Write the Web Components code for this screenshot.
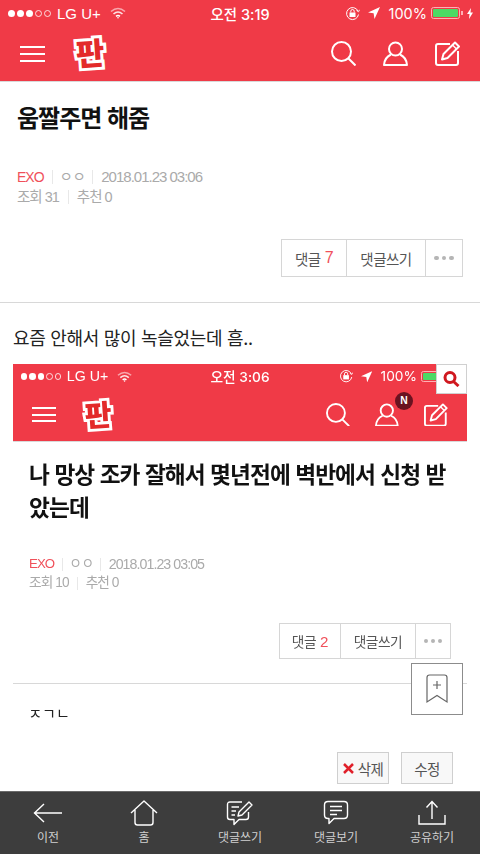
<!DOCTYPE html>
<html lang="ko">
<head>
<meta charset="utf-8">
<title>판</title>
<style>
    html, body { margin: 0; background: #fff; }
    body { font-family: "Liberation Sans", "Noto Sans CJK KR", sans-serif; }
</style>
</head>
<body>
<pann-page>
    <app-header time="3:19"></app-header>
    <post-head>움짤주면 해줌
        <meta-info slot="meta" views="31" date="2018.01.23 03:06"></meta-info>
        <action-group slot="actions" count="7"></action-group>
    </post-head>
    <post-body>
        <p>요즘 안해서 많이 녹슬었는데 흠..</p>
        <shot-frame>
            <app-header time="3:06" badge="N"></app-header>
            <post-head>나 망상 조카 잘해서 몇년전에 벽반에서 신청 받았는데
                <meta-info slot="meta" views="10" date="2018.01.23 03:05"></meta-info>
                <action-group slot="actions" count="2"></action-group>
            </post-head>
            <div style="padding: 20px 16px 0; font-size: 16px; line-height: 24px; color: #222;">ㅈㄱㄴ</div>
        </shot-frame>
    </post-body>
    <edit-row></edit-row>
    <bookmark-button></bookmark-button>
    <tab-bar>
        <tab-item label="이전">
            <svg width="30" height="26" viewBox="0 0 30 26" fill="none" stroke="#fff" stroke-width="1.4"><path d="M1 13H29M11 4L1.5 13L11 22"/></svg>
        </tab-item>
        <tab-item label="홈">
            <svg width="28" height="26" viewBox="0 0 28 26" fill="none" stroke="#fff" stroke-width="1.4" stroke-linejoin="round"><path d="M1 13L14 1L27 13M5 10V22.5Q5 25 7.5 25H20.5Q23 25 23 22.5V10"/></svg>
        </tab-item>
        <tab-item label="댓글쓰기">
            <svg width="28" height="26" viewBox="0 0 28 26" fill="none" stroke="#fff" stroke-width="1.4" stroke-linejoin="round"><path d="M16 2H4Q1.500 2 1.500 4.500V17Q1.500 19.500 4 19.500H8V24.500L13 19.500H20Q22.500 19.500 22.500 17V12"/><path d="M5.500 7H13M5.500 11H10M5.500 15H9"/><path d="M12 16L13 12L23 2L26 5L16 15Z"/></svg>
        </tab-item>
        <tab-item label="댓글보기">
            <svg width="26" height="26" viewBox="0 0 26 26" fill="none" stroke="#fff" stroke-width="1.4" stroke-linejoin="round"><path d="M5 1.500H21Q24.500 1.500 24.500 5V15Q24.500 18.500 21 18.500H11L6 23.500V18.500H5Q1.500 18.500 1.500 15V5Q1.500 1.500 5 1.500Z"/><path d="M7 6.500H19M7 10.500H19M7 14.500H14"/></svg>
        </tab-item>
        <tab-item label="공유하기">
            <svg width="30" height="26" viewBox="0 0 30 26" fill="none" stroke="#fff" stroke-width="1.4"><path d="M15 19V2M9.500 7.500L15 1.500L20.500 7.500M2 15V24H28V15"/></svg>
        </tab-item>
    </tab-bar>
</pann-page>

<script>
const FONT = `"Liberation Sans", "Noto Sans CJK KR", sans-serif`;

const makeTemplate = (html) => {
    const t = document.createElement("template");
    t.innerHTML = html;
    return t;
};

class BaseEl extends HTMLElement {
    constructor() {
        super();
        this.attachShadow({ mode: "open" });
    }
    render(t) {
        this.shadowRoot.appendChild(t.content.cloneNode(true));
    }
}

const pageTpl = makeTemplate(/*html*/`
<style>
    :host {
        display: flex;
        flex-direction: column;
        position: relative;
        width: 480px;
        height: 854px;
        overflow: hidden;
        background: #fff;
        font-family: ${FONT};
    }
</style>
<slot></slot>`);
class PannPage extends BaseEl {
    connectedCallback() { this.render(pageTpl); }
}

const headerTpl = makeTemplate(/*html*/`
<style>
    :host { display: block; background: #f03a47; color: #fff; border-bottom: 1px solid #d9d9d9; height: 81px; box-sizing: content-box; }
    .status { display: flex; align-items: center; height: 26px; position: relative; font: 14.5px Inter, "Noto Sans CJK KR", sans-serif; }
    .left, .right { display: flex; align-items: center; position: absolute; top: 0; height: 26px; }
    .left { left: 8px; }
    .right { right: 7px; }
    .dots { display: flex; gap: 2px; margin-right: 6px; }
    .dots i { width: 7px; height: 7px; border-radius: 50%; background: #fff; box-sizing: border-box; }
    .dots i.off { background: none; border: 1px solid #fff; opacity: .8; }
    .carrier { font-family: "Liberation Sans", sans-serif; font-size: 15px; margin-right: 9px; }
    .time { margin: 0 auto; font-weight: 500; }
    .pct { margin: 0 4px 0 9px; }
    .battery { width: 29px; height: 12px; border: 1px solid #ffb0b4; border-radius: 2.500px; padding: 1px; box-sizing: border-box; margin-right: 1px; }
    .battery b { display: block; height: 100%; background: #4cd964; border-radius: 1px; }
    .nub { width: 2px; height: 4px; background: #ffb0b4; margin-right: 4px; }
    .nav { display: flex; align-items: center; height: 55px; padding: 0 20px; }
    .burger { width: 25px; height: 16px; display: flex; flex-direction: column; justify-content: space-between; margin-right: 28px; }
    .burger i { height: 2px; background: #fff; }
    .logo {
        font: 900 31px/34px "Noto Sans CJK KR", sans-serif;
        color: #e32a2a;
        -webkit-text-stroke: 6px #fff;
        paint-order: stroke fill;
        transform: rotate(-4deg);
        width: 34px;
        text-align: center;
        margin-top: -4px;
    }
    .icons { display: flex; gap: 27px; margin-left: auto; align-items: center; }
    .user { position: relative; display: flex; }
    .badge {
        position: absolute;
        left: 21px;
        top: -11px;
        width: 19px;
        height: 19px;
        border-radius: 50%;
        background: #6a1220;
        font: bold 11px/19px "Liberation Sans", sans-serif;
        text-align: center;
    }
    svg { display: block; }
</style>
<div class="status">
    <div class="left">
        <span class="dots"><i></i><i></i><i></i><i class="off"></i><i class="off"></i></span>
        <span class="carrier">LG U+</span>
        <svg width="16" height="12" viewBox="0 0 16 12" fill="none" stroke="#fff" stroke-width="1.6"><path d="M1 4.500Q8 -1.500 15 4.500" opacity=".55"/><path d="M3.500 7Q8 3 12.500 7" opacity=".85"/><path d="M6 9.300Q8 7.800 10 9.300"/><circle cx="8" cy="10.700" r=".8" fill="#fff" stroke="none"/></svg>
    </div>
    <span class="time"></span>
    <div class="right">
        <svg width="15" height="15" viewBox="0 0 15 15" fill="none" stroke="#fff" stroke-width="1"><path d="M13 5A6 6 0 1 0 13.500 8.500"/><path d="M11.500 4.500L13.500 5.800L14.500 3.800" stroke-width=".9"/><rect x="4.500" y="6.500" width="6" height="4.500" fill="#fff" stroke="none"/><path d="M5.800 6.500V5.200A1.700 1.700 0 0 1 9.200 5.200V6.500"/></svg>
        <svg style="margin-left:8px" width="12" height="12" viewBox="0 0 12 12" fill="#fff"><path d="M12 0L0 5.500L5.600 6.300L6.500 12Z"/></svg>
        <span class="pct">100%</span>
        <span class="battery"><b></b></span><span class="nub"></span>
        <svg width="6" height="11" viewBox="0 0 6 11" fill="#fff"><path d="M4 0L0 6H2.500L2 11L6 4.500H3.500Z"/></svg>
    </div>
</div>
<div class="nav">
    <div class="burger"><i></i><i></i><i></i></div>
    <div class="logo">판</div>
    <div class="icons">
        <svg width="25" height="25" viewBox="0 0 25 25" fill="none" stroke="#fff" stroke-width="2"><circle cx="10.500" cy="10.500" r="9.500"/><path d="M17.500 17.500L24.500 24.500"/></svg>
        <span class="user">
            <svg width="25" height="25" viewBox="0 0 25 25" fill="none" stroke="#fff" stroke-width="2" stroke-linejoin="round"><circle cx="12.500" cy="8" r="6.500"/><path d="M8 13.500Q1.500 16.500 1 24H24Q23.500 16.500 17 13.500"/></svg>
        </span>
        <svg width="25" height="25" viewBox="0 0 25 25" fill="none" stroke="#fff" stroke-width="2" stroke-linejoin="round"><path d="M15 3H3Q1 3 1 5V22Q1 24 3 24H21Q23 24 23 22V10"/><path d="M7 18.500L8.500 13L20 1.500L24 5.500L12.500 17Z"/><path d="M17.500 4L21.500 8" stroke-width="1.500"/></svg>
    </div>
</div>`);
class AppHeader extends BaseEl {
    connectedCallback() {
        this.render(headerTpl);
        this.shadowRoot.querySelector(".time").textContent = "오전 " + this.getAttribute("time");
        const badge = this.getAttribute("badge");
        if (badge) {
            const b = document.createElement("span");
            b.className = "badge";
            b.textContent = badge;
            this.shadowRoot.querySelector(".user").appendChild(b);
        }
    }
}

const headTpl = makeTemplate(/*html*/`
<style>
    :host { display: block; padding: 16.500px 17px 0 17px; }
    h1 { margin: 0 0 33.500px; font: bold 24px/35px "Noto Sans CJK KR", sans-serif; letter-spacing: -1px; color: #111; }
    .actions { display: flex; justify-content: flex-end; margin-top: 32px; padding-bottom: 25px; }
</style>
<h1><slot></slot></h1>
<slot name="meta"></slot>
<div class="actions"><slot name="actions"></slot></div>`);
class PostHead extends BaseEl {
    connectedCallback() { this.render(headTpl); }
}

const metaTpl = makeTemplate(/*html*/`
<style>
    :host { display: block; font: 14.500px/20px "Liberation Sans", "Noto Sans CJK KR", sans-serif; letter-spacing: -1px; color: #aaa; }
    div { display: flex; align-items: center; height: 20px; }
    span + span { margin-left: 9px; padding-left: 9px; position: relative; }
    span + span::before { content: ""; position: absolute; left: 0; top: 3px; height: 14px; width: 1px; background: #e8e8e8; }
    .author { color: #f0505a; font-size: 14px; }
    .nick { letter-spacing: -.5px; margin-left: 8px; padding-left: 8px; }
    .date { font-size: 15px; margin-left: 7px; }
</style>
<div><span class="author">EXO</span><span class="nick">ㅇㅇ</span><span class="date"></span></div>
<div><span class="views"></span><span>추천 0</span></div>`);
class MetaInfo extends BaseEl {
    connectedCallback() {
        this.render(metaTpl);
        this.shadowRoot.querySelector(".date").textContent = this.getAttribute("date");
        this.shadowRoot.querySelector(".views").textContent = "조회 " + this.getAttribute("views");
    }
}

const actionTpl = makeTemplate(/*html*/`
<style>
    :host { display: flex; height: 38px; border: 1px solid #d6d6d6; box-sizing: border-box; font: 14.500px "Noto Sans CJK KR", sans-serif; letter-spacing: -.5px; color: #555; }
    div { display: flex; align-items: center; justify-content: center; }
    div + div { border-left: 1px solid #d6d6d6; }
    .a { width: 64px; }
    .b { width: 78px; }
    .c { width: 36px; gap: 3px; }
    .c i { width: 4.500px; height: 4.500px; border-radius: 50%; background: #b5b5b5; }
    em { font: 16px "Liberation Sans", sans-serif; color: #f0505a; margin-left: 4px; }
</style>
<div class="a">댓글<em></em></div>
<div class="b">댓글쓰기</div>
<div class="c"><i></i><i></i><i></i></div>`);
class ActionGroup extends BaseEl {
    connectedCallback() {
        this.render(actionTpl);
        this.shadowRoot.querySelector("em").textContent = this.getAttribute("count");
    }
}

const bodyTpl = makeTemplate(/*html*/`
<style>
    :host { display: block; border-top: 1px solid #d8d8d8; padding: 0 13px; }
    ::slotted(p) { margin: 0; padding-top: 21px; font: 18px/26px "Noto Sans CJK KR", sans-serif; letter-spacing: -.3px; color: #222; height: 40px; }
</style>
<slot></slot>`);
class PostBody extends BaseEl {
    connectedCallback() { this.render(bodyTpl); }
}

const frameTpl = makeTemplate(/*html*/`
<style>
    :host { display: block; position: relative; height: 358px; overflow: hidden; }
    .shot { zoom: .946; filter: blur(.35px); }
    .find {
        position: absolute;
        top: 0;
        right: 0;
        width: 31px;
        height: 30px;
        box-sizing: border-box;
        background: #fff;
        border: 1px solid #d0d0d0;
        display: flex;
        align-items: center;
        justify-content: center;
    }
</style>
<div class="shot"><slot></slot></div>
<div class="find">
    <svg width="17" height="16" viewBox="0 0 17 16" fill="none" stroke="#d0181f" stroke-width="3"><circle cx="7" cy="6.500" r="5"/><path d="M10.500 10.500L15.500 15"/></svg>
</div>`);
class ShotFrame extends BaseEl {
    connectedCallback() {
        this.render(frameTpl);
        // the second post-head sits above a divider, as in the shot
        const head = this.querySelector("post-head");
        if (head) head.style.borderBottom = "1px solid #d8d8d8";
    }
}

const editTpl = makeTemplate(/*html*/`
<style>
    :host { display: flex; justify-content: flex-end; gap: 12px; padding: 30px 27px 0 0; height: 39px; font: 14.500px "Noto Sans CJK KR", sans-serif; letter-spacing: -.5px; color: #555; }
    div { width: 52px; height: 32px; box-sizing: border-box; background: #f8f8f8; border: 1px solid #cfcfcf; display: flex; align-items: center; justify-content: center; gap: 4px; }
</style>
<div><svg width="11" height="11" viewBox="0 0 11 11" stroke="#e0202a" stroke-width="2.500"><path d="M1 1L10 10M10 1L1 10"/></svg>삭제</div>
<div>수정</div>`);
class EditRow extends BaseEl {
    connectedCallback() { this.render(editTpl); }
}

const bookmarkTpl = makeTemplate(/*html*/`
<style>
    :host {
        position: absolute;
        left: 411px;
        top: 663px;
        width: 52px;
        height: 52px;
        box-sizing: border-box;
        background: #fff;
        border: 1px solid #8c8c8c;
        display: flex;
        align-items: center;
        justify-content: center;
    }
</style>
<svg width="22" height="30" viewBox="0 0 22 30" fill="none" stroke="#666" stroke-width="1.200"><path d="M1 28V3.500Q1 1 3.500 1H18.500Q21 1 21 3.500V28L11 21.500Z"/><path d="M11 7V15M7 11H15"/></svg>`);
class BookmarkButton extends BaseEl {
    connectedCallback() { this.render(bookmarkTpl); }
}

const tabsTpl = makeTemplate(/*html*/`
<style>
    :host { display: grid; grid-template-columns: repeat(5, 96px); height: 62px; margin-top: auto; background: #3d3d3d; border-top: 1px solid #6a6a6a; }
</style>
<slot></slot>`);
class TabBar extends BaseEl {
    connectedCallback() { this.render(tabsTpl); }
}

const tabTpl = makeTemplate(/*html*/`
<style>
    :host { display: flex; flex-direction: column; align-items: center; padding-top: 8px; font: 12px/16px "Noto Sans CJK KR", sans-serif; color: #d0d0d0; }
    .ico { height: 26px; margin-bottom: 3px; display: flex; }
</style>
<div class="ico"><slot></slot></div>
<span></span>`);
class TabItem extends BaseEl {
    connectedCallback() {
        this.render(tabTpl);
        this.shadowRoot.querySelector("span").textContent = this.getAttribute("label");
    }
}

customElements.define("pann-page", PannPage);
customElements.define("app-header", AppHeader);
customElements.define("post-head", PostHead);
customElements.define("meta-info", MetaInfo);
customElements.define("action-group", ActionGroup);
customElements.define("post-body", PostBody);
customElements.define("shot-frame", ShotFrame);
customElements.define("edit-row", EditRow);
customElements.define("bookmark-button", BookmarkButton);
customElements.define("tab-bar", TabBar);
customElements.define("tab-item", TabItem);
</script>
</body>
</html>
